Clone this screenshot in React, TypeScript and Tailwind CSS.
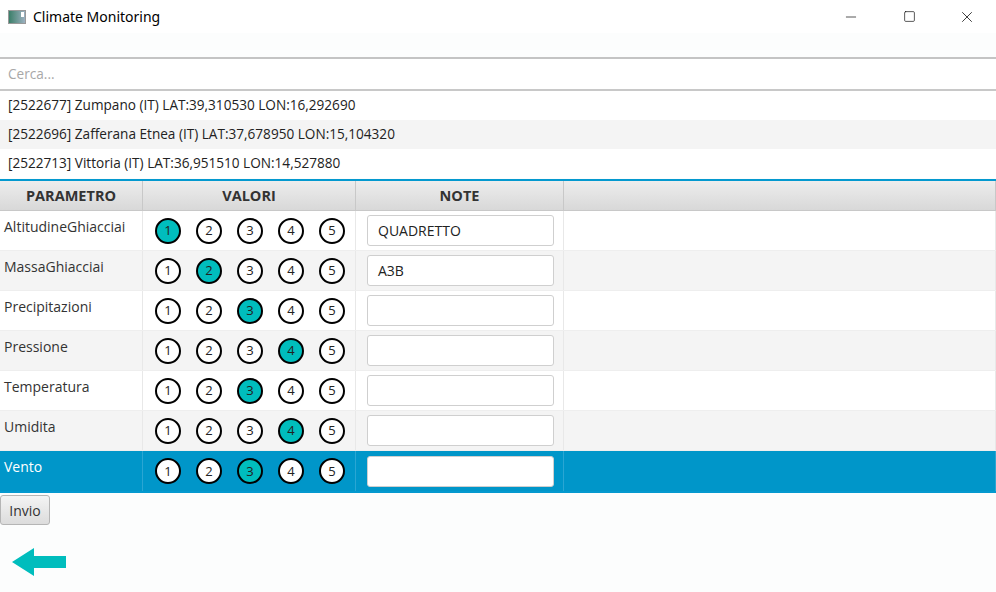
import { Minus, Square, X } from 'lucide-react';

const cities = [
  '[2522677] Zumpano (IT) LAT:39,310530 LON:16,292690',
  '[2522696] Zafferana Etnea (IT) LAT:37,678950 LON:15,104320',
  '[2522713] Vittoria (IT) LAT:36,951510 LON:14,527880',
];

const rows = [
  { name: 'AltitudineGhiacciai', value: 1, note: 'QUADRETTO' },
  { name: 'MassaGhiacciai', value: 2, note: 'A3B' },
  { name: 'Precipitazioni', value: 3, note: '' },
  { name: 'Pressione', value: 4, note: '' },
  { name: 'Temperatura', value: 3, note: '' },
  { name: 'Umidita', value: 4, note: '' },
  { name: 'Vento', value: 3, note: '' },
];

function Radio({ n, on }: { n: number; on: boolean }) {
  return (
    <div
      className={`w-[26px] h-[26px] rounded-full border-2 border-black flex items-center justify-center text-[13px] leading-none text-[#222] ${
        on ? 'bg-[#00bdbd]' : 'bg-white'
      }`}
    >
      {n}
    </div>
  );
}

export default function App() {
  return (
    <div className="w-[996px] h-[592px] bg-[#fcfdfd] flex flex-col font-['Open_Sans','Noto_Sans',sans-serif] text-[#333] overflow-hidden">
      {/* title bar */}
      <div className="h-[33px] bg-white flex items-center shrink-0">
        <div className="ml-[8px] w-[18px] h-[14px] border border-[#999] bg-gradient-to-r from-[#3a7f6a] to-[#9bb0c0] flex items-start justify-end">
          <div className="w-[3px] h-[5px] bg-white mt-[1px] mr-[1px]" />
        </div>
        <span className="ml-[7px] text-[14px] text-black font-['Noto_Sans',sans-serif]">Climate Monitoring</span>
        <div className="ml-auto flex items-center h-full">
          <div className="w-[58px] flex justify-center"><Minus size={16} strokeWidth={1} className="text-black" /></div>
          <div className="w-[58px] flex justify-center"><Square size={13} strokeWidth={1.2} className="text-black" /></div>
          <div className="w-[58px] flex justify-center"><X size={18} strokeWidth={1} className="text-black" /></div>
        </div>
      </div>
      <div className="h-[24px] shrink-0" />

      {/* search */}
      <div className="h-[32px] border-t-2 border-[#c4c4c4] bg-white flex items-center px-[8px] text-[13.6px] text-[#a8a8a8] shrink-0">
        Cerca...
      </div>

      {/* list */}
      <div className="border-t-2 border-[#c8c8c8] flex flex-col text-[13.6px] text-[#222] shrink-0">
        {cities.map((c, i) => (
          <div
            key={c}
            className={`h-[29px] flex items-center px-[8px] ${i % 2 === 1 ? 'bg-[#f4f4f4]' : 'bg-white'}`}
          >
            {c}
          </div>
        ))}
      </div>

      {/* table */}
      <div className="mt-[1px] border-t-2 border-b-2 border-[#0499cf] bg-white shrink-0">
        <div className="grid grid-cols-[143px_213px_208px_1fr] h-[30px] bg-gradient-to-b from-[#ededed] to-[#d8d8d8] border-b border-[#c8c8c8] text-[14.5px] font-bold text-[#333]">
          <div className="flex items-center justify-center border-r border-[#c8c8c8]">PARAMETRO</div>
          <div className="flex items-center justify-center border-r border-[#c8c8c8]">VALORI</div>
          <div className="flex items-center justify-center border-r border-[#c8c8c8]">NOTE</div>
          <div className="border-r border-[#c8c8c8]" />
        </div>
        {rows.map((r, i) => {
          const sel = i === rows.length - 1;
          const bg = sel ? 'bg-[#0096c9]' : i % 2 === 1 ? 'bg-[#f4f4f4]' : 'bg-white';
          const line = sel ? 'border-[#2aa6d3]' : 'border-[#e8e8e8]';
          return (
            <div key={r.name} className={`grid grid-cols-[143px_213px_208px_1fr] h-[40px] ${bg} ${sel ? '' : 'border-b border-[#eeeeee]'}`}>
              <div className={`pl-[4px] pt-[5px] text-[14px] border-r ${line} ${sel ? 'text-white' : 'text-[#333]'}`}>{r.name}</div>
              <div className={`flex items-center gap-[15px] pl-[12px] border-r ${line}`}>
                {[1, 2, 3, 4, 5].map((n) => (
                  <Radio key={n} n={n} on={n === r.value} />
                ))}
              </div>
              <div className={`flex items-center pl-[11px] border-r ${line}`}>
                <div className="w-[187px] h-[31px] bg-white border border-[#cfcfcf] rounded-[3px] flex items-center px-[10px] text-[14px] text-[#222]">
                  {r.note}
                </div>
              </div>
              <div className={`border-r ${line}`} />
            </div>
          );
        })}
      </div>

      {/* button */}
      <div className="pt-[2px] shrink-0">
        <button className="w-[50px] h-[30px] border border-[#b5b5b5] rounded-[3px] bg-gradient-to-b from-[#f4f4f4] to-[#dcdcdc] text-[14px] text-[#333]">
          Invio
        </button>
      </div>

      {/* back arrow */}
      <div className="ml-[11px] mt-[23px]">
        <svg width="56" height="30" viewBox="0 0 56 30">
          <path d="M1 14 L23 0 L23 8 L55 8 L55 20 L23 20 L23 28 Z" fill="#00bdbd" />
        </svg>
      </div>
    </div>
  );
}
